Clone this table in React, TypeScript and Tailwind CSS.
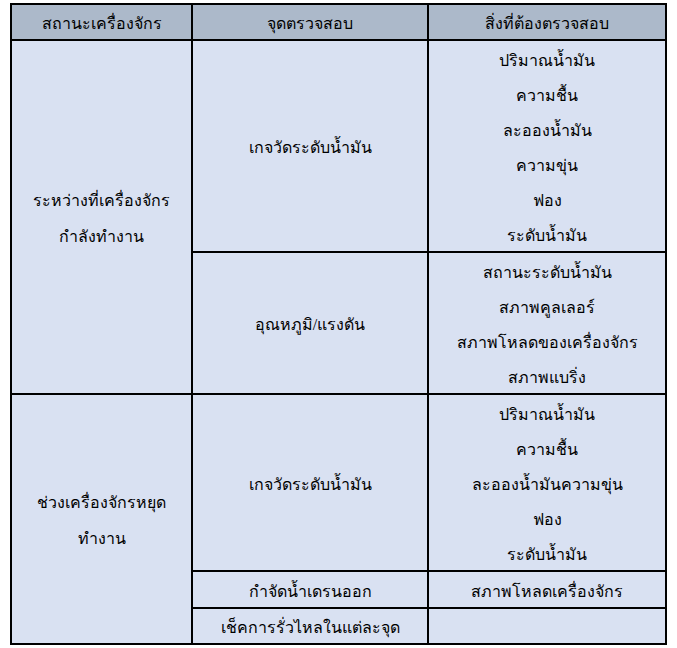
import React from 'react';

const font = { fontFamily: '"Angsana New", "Norasi", "Kinnari", "Tlwg Typo", "Liberation Serif", serif' };

const groups = [
  {
    state: ['ระหว่างที่เครื่องจักร', 'กำลังทำงาน'],
    rows: [
      { point: 'เกจวัดระดับน้ำมัน', items: ['ปริมาณน้ำมัน', 'ความชื้น', 'ละอองน้ำมัน', 'ความขุ่น', 'ฟอง', 'ระดับน้ำมัน'], h: 'h-[210px]' },
      { point: 'อุณหภูมิ/แรงดัน', items: ['สถานะระดับน้ำมัน', 'สภาพคูลเลอร์', 'สภาพโหลดของเครื่องจักร', 'สภาพแบริ่ง'], h: 'h-[138px]' },
    ],
  },
  {
    state: ['ช่วงเครื่องจักรหยุด', 'ทำงาน'],
    rows: [
      { point: 'เกจวัดระดับน้ำมัน', items: ['ปริมาณน้ำมัน', 'ความชื้น', 'ละอองน้ำมันความขุ่น', 'ฟอง', 'ระดับน้ำมัน'], h: 'h-[176px]' },
      { point: 'กำจัดน้ำเดรนออก', items: ['สภาพโหลดเครื่องจักร'], h: 'h-[34px]' },
      { point: 'เช็คการรั่วไหลในแต่ละจุด', items: [], h: 'h-[36px]' },
    ],
  },
];

const App = () => {
  return (
    <div className="bg-white w-[677px] h-[648px] pl-[10px] pt-[3px]" style={font}>
      <table className="border-collapse border-2 border-black text-black text-[16px] w-[655px] table-fixed">
        <colgroup>
          <col className="w-[181px]" />
          <col className="w-[236px]" />
          <col className="w-[238px]" />
        </colgroup>
        <thead>
          <tr className="bg-[#acb9ca] h-[36px]">
            <th className="border-2 border-black font-normal text-center pt-[4px]">สถานะเครื่องจักร</th>
            <th className="border-2 border-black font-normal text-center pt-[4px]">จุดตรวจสอบ</th>
            <th className="border-2 border-black font-normal text-center pt-[4px]">สิ่งที่ต้องตรวจสอบ</th>
          </tr>
        </thead>
        <tbody className="bg-[#d9e1f2]">
          {groups.map((g, gi) =>
            g.rows.map((r, ri) => (
              <tr key={`${gi}-${ri}`} className={r.h}>
                {ri === 0 && (
                  <td rowSpan={g.rows.length} className="border-2 border-black text-center align-middle">
                    {g.state.map((s, i) => (
                      <div key={i} className="h-[36px] pt-[4px] flex items-center justify-center">{s}</div>
                    ))}
                  </td>
                )}
                <td className="border-2 border-black text-center align-middle p-0 pt-[4px]">{r.point}</td>
                <td className="border-2 border-black text-center align-middle p-0">
                  {r.items.map((it, i) => (
                    <div key={i} className="h-[35px] pt-[4px] flex items-center justify-center">{it}</div>
                  ))}
                </td>
              </tr>
            ))
          )}
        </tbody>
      </table>
    </div>
  );
};

export default App;
